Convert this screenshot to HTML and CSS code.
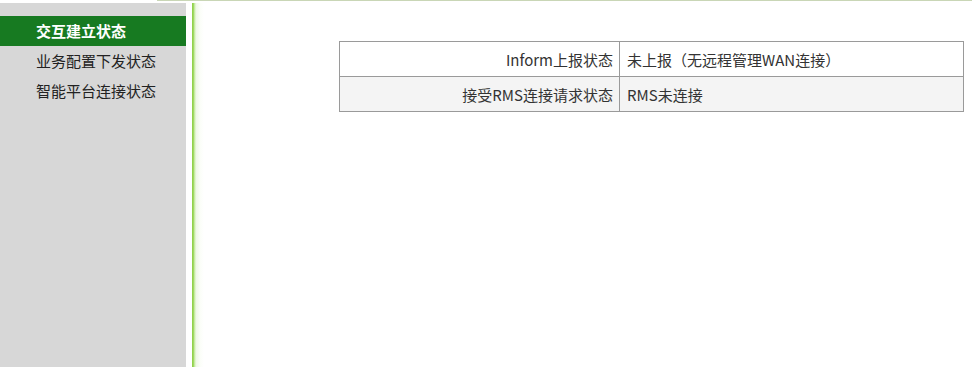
FILE: index.html
```html
<!DOCTYPE html>
<html lang="zh-CN">
<head>
<meta charset="utf-8">
<link rel="stylesheet" href="styles.css">
</head>
<body>
<div class="topbar"><div class="topline"></div></div>
<div class="frame">
  <nav class="sidebar">
    <a class="nav-item active">交互建立状态</a>
    <a class="nav-item">业务配置下发状态</a>
    <a class="nav-item">智能平台连接状态</a>
  </nav>
  <div class="divider"></div>
  <main class="content">
    <table class="status">
      <tr>
        <td class="label">Inform上报状态</td>
        <td class="value">未上报（无远程管理WAN连接）</td>
      </tr>
      <tr class="alt">
        <td class="label">接受RMS连接请求状态</td>
        <td class="value">RMS未连接</td>
      </tr>
    </table>
  </main>
</div>
</body>
</html>
```
FILE: styles.css
```css
html, body {
  margin: 0;
  padding: 0;
  background: #fff;
  height: 100%;
}
body {
  font-family: "Noto Sans CJK SC", "Noto Sans", sans-serif;
  font-size: 15px;
  color: #333;
  overflow: hidden;
}
.topbar {
  height: 3px;
  display: flex;
  justify-content: flex-end;
}
.topline {
  width: 815px;
  height: 1px;
  background: #c9d6b6;
}
.frame {
  display: flex;
  height: 364px;
}
.sidebar {
  width: 186px;
  background: #d7d7d7;
  padding-top: 13px;
  box-sizing: border-box;
  display: flex;
  flex-direction: column;
}
.nav-item {
  display: block;
  height: 30px;
  line-height: 30px;
  padding-left: 36px;
  font-size: 15px;
  color: #222;
}
.nav-item.active {
  background: #177a21;
  color: #fff;
  font-weight: bold;
}
.divider {
  margin-left: 6px;
  width: 12px;
  background: linear-gradient(to right, #9fd95a 0px, #86cc3c 1px, #b8e68a 2px, #eef8e4 4px, #fbfef8 8px, #fff 12px);
}
.content {
  flex: 1;
  padding-top: 38px;
  padding-left: 135px;
}
.status {
  border-collapse: collapse;
  width: 625px;
  border: 1px solid #9a9a9a;
}
.status td {
  height: 34px;
  padding: 0;
  border: 1px solid #9a9a9a;
  white-space: nowrap;
}
.status .label {
  width: 273px;
  text-align: right;
  padding-right: 6px;
}
.status .value {
  padding-left: 7px;
}
.status tr.alt td {
  background: #f4f4f4;
}
```
